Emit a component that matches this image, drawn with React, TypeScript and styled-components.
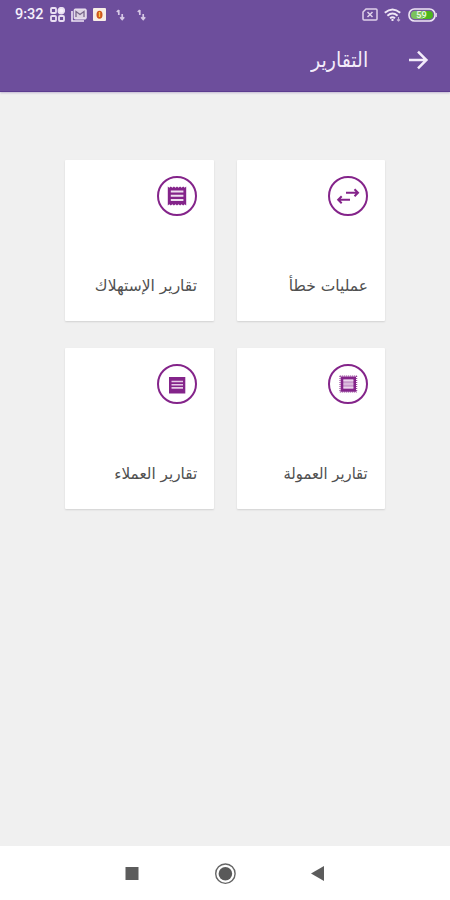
import React from 'react';
import styled, { createGlobalStyle } from 'styled-components';

const Global = createGlobalStyle`
  * { box-sizing: border-box; }
  body { margin: 0; background: #f0f0f0; }
`;

const Screen = styled.div`
  width: 450px;
  height: 900px;
  display: flex;
  flex-direction: column;
  background: #f0f0f0;
  font-family: 'DejaVu Sans', sans-serif;
  overflow: hidden;
`;

const Header = styled.header`
  height: 92px;
  flex: none;
  background: #6d4e9c;
  border-bottom: 1px solid #5c3c8f;
  box-shadow: 0 1px 2px rgba(109, 78, 156, 0.35);
`;

const StatusBar = styled.div`
  height: 29px;
  padding: 0 13px 0 15px;
  display: flex;
  align-items: center;
  justify-content: space-between;
`;

const StatusGroup = styled.div<{ $gap: number }>`
  display: flex;
  align-items: center;
  gap: ${(p) => p.$gap}px;
  svg { display: block; }
`;

const DataGroup = styled(StatusGroup)`
  padding-left: 4px;
`;

const Clock = styled.span`
  width: 29px;
  font: 500 14.5px/29px Roboto, sans-serif;
  color: #f5effb;
`;

const AppBar = styled.div`
  height: 62px;
  display: flex;
  direction: rtl;
  align-items: center;
  padding-right: 20px;
  gap: 39px;
  svg { display: block; }
`;

const Title = styled.h1<{ $scale: number }>`
  margin: 0;
  font-size: 21px;
  font-weight: 400;
  line-height: 30px;
  color: #f3ecfa;
  white-space: nowrap;
  transform: scaleX(${(p) => p.$scale});
  transform-origin: right center;
`;

const Content = styled.main`
  flex: 1;
  padding: 67.5px 65px 0;
`;

const Grid = styled.div`
  direction: rtl;
  display: grid;
  grid-template-columns: 148px 149px;
  grid-auto-rows: 161px;
  gap: 27px 23px;
`;

const Card = styled.article`
  background: #fff;
  border-radius: 1px;
  box-shadow: 0 1px 2px rgba(0, 0, 0, 0.13);
  padding: 16px 17px 22px;
  display: flex;
  flex-direction: column;
  justify-content: space-between;
  align-items: flex-start;
  svg { display: block; }
`;

const Label = styled.span<{ $scale: number }>`
  font-size: 15.5px;
  line-height: 26px;
  color: #505050;
  white-space: nowrap;
  transform: scaleX(${(p) => p.$scale});
  transform-origin: right center;
`;

const NavBar = styled.nav`
  height: 54px;
  flex: none;
  background: #fff;
  display: flex;
  justify-content: space-between;
  align-items: center;
  padding: 1px 125px 0;
  svg { display: block; }
`;

const purple = '#84248a';

type Kind = 'swap' | 'receipt' | 'receiptSmall' | 'receiptFramed';

const Ring = ({ kind }: { kind: Kind }) => (
  <svg width="40" height="40" viewBox="0 0 40 40" fill="none" stroke={purple}>
    <circle cx="20" cy="20" r="19" strokeWidth="2" />
    {kind === 'swap' && (
      <g strokeWidth="2">
        <path d="M18 16.7H29M26.5 13.2L30 16.7L26.5 20.2" />
        <path d="M22 23.8H11M13.7 20.3L10.2 23.8L13.7 27.3" />
      </g>
    )}
    {kind === 'receipt' && (
      <>
        <path
          fill={purple}
          stroke="none"
          d="M10.8 10.4l1.5 1.3 1.5-1.3 1.6 1.3 1.5-1.3 1.6 1.3 1.5-1.3 1.5 1.3 1.6-1.3 1.5 1.3 1.6-1.3 1.5 1.3 1.5-1.3v19.2l-1.5-1.3-1.5 1.3-1.6-1.3-1.5 1.3-1.6-1.3-1.5 1.3-1.5-1.3-1.6 1.3-1.5-1.3-1.6 1.3-1.5-1.3-1.5 1.3z"
        />
        <path stroke="#eee0f0" strokeWidth="2" d="M13.8 15.6h12.6M13.8 19.8h12.6M13.8 24h12.6" />
      </>
    )}
    {kind === 'receiptSmall' && (
      <>
        <path fill={purple} stroke="none" d="M12 13h16.3v16.5H12z" />
        <path stroke="#e5cbe6" strokeWidth="1.6" d="M14.5 17.5h11.5M14.5 20.7h11.5M14.5 23.9h11.5" />
      </>
    )}
    {kind === 'receiptFramed' && (
      <>
        <path strokeWidth="1" strokeDasharray="1 1" d="M11.8 12h17M11.8 28h17M12 12v16M28.7 12v16" />
        <path fill="#c99bcd" strokeWidth="2.6" d="M14 13.8h12.7v12.6H14z" />
        <path stroke="#ead5ec" strokeWidth="1.2" d="M15.5 16.7h9.8M15.5 20h9.8M15.5 23.3h9.8" />
      </>
    )}
  </svg>
);

const DataArrows = () => (
  <svg width="9" height="12" viewBox="0 0 9 12" stroke="#d6c8e5" fill="none" strokeWidth="1.7">
    <path d="M2.8 6V1M.8 3l2-2M6.2 5v5.5M4.2 8.3l2 2.2 2-2.2" />
  </svg>
);

const StatusLeft = () => (
  <StatusGroup $gap={6}>
    <Clock>9:32</Clock>
    <svg width="15" height="15" viewBox="0 0 15 15" fill="none" stroke="#e9dff2" strokeWidth="1.8">
      <rect x="1" y="1" width="5" height="5" rx="1" />
      <circle cx="11.3" cy="3.7" r="2.9" fill="#f6effb" />
      <rect x="1" y="9" width="5" height="5" rx="1" />
      <rect x="9" y="9" width="5" height="5" rx="1" />
    </svg>
    <svg width="16" height="14" viewBox="0 0 16 14" fill="none" stroke="#eee5f4">
      <path d="M1 3v10h12" strokeWidth="1.6" />
      <rect x="3.2" y="1" width="12" height="10" rx="1" fill="#ded4e4" />
      <path d="M5 9V3.5l4 3 4-3V9" stroke="#79688b" strokeWidth="1.3" />
    </svg>
    <svg width="13" height="13" viewBox="0 0 13 13">
      <rect width="13" height="13" rx="1" fill="#f8eee6" />
      <ellipse cx="6.5" cy="6.7" rx="3" ry="4" fill="#cf571d" />
      <path d="M6.5 4v5" stroke="#f9c549" strokeWidth="1.4" />
    </svg>
    <DataGroup $gap={12}>
      <DataArrows />
      <DataArrows />
    </DataGroup>
  </StatusGroup>
);

const StatusRight = () => (
  <StatusGroup $gap={6}>
    <svg width="16" height="13" viewBox="0 0 16 13" fill="none" stroke="#dfd1ea" strokeWidth="1.5">
      <path d="M4 1h10q1 0 1 1v9q0 1-1 1H2q-1 0-1-1V4z" />
      <path d="M5.5 4l5 5M10.5 4l-5 5" />
    </svg>
    <svg width="18" height="14" viewBox="0 0 18 14" fill="none" stroke="#f0e7f6" strokeWidth="2">
      <path d="M.8 4.8q7.7-6.6 15.4 0M3.4 7.7q5.1-4.3 10.2 0M6 10.3q2.5-2 5 0" />
      <path d="M8.5 11v2" />
      <path d="M14.5 9v4M13 11.5l1.5 1.5 1.5-1.5" stroke="#c8b5d9" strokeWidth="1.1" />
    </svg>
    <svg width="29" height="14" viewBox="0 0 29 14">
      <rect x="1" y="1" width="26" height="12" rx="5.5" fill="#765b9d" stroke="#eee5f5" strokeWidth="1.6" />
      <path d="M28.2 5v4" stroke="#eee5f5" strokeWidth="1.2" />
      <path d="M7 3h8v8H7q-4 0-4-4t4-4z" fill="#7cc35e" />
      <path d="M15 3h6q4 0 4 4t-4 4h-6z" fill="#4cb51d" />
      <text x="13.5" y="10.3" textAnchor="middle" fill="#e4f7dc" fontFamily="Roboto, sans-serif" fontWeight="700" fontSize="9">59</text>
    </svg>
  </StatusGroup>
);

const cards: { label: string; kind: Kind; scale: number }[] = [
  { label: 'عمليات خطأ', kind: 'swap', scale: 1 },
  { label: 'تقارير الإستهلاك', kind: 'receipt', scale: 1 },
  { label: 'تقارير العمولة', kind: 'receiptFramed', scale: 0.95 },
  { label: 'تقارير العملاء', kind: 'receiptSmall', scale: 0.985 },
];

export default function App() {
  return (
    <>
      <Global />
      <Screen>
        <Header>
          <StatusBar>
            <StatusLeft />
            <StatusRight />
          </StatusBar>
          <AppBar>
            <svg width="23" height="20" viewBox="0 0 23 20" fill="none" stroke="#f3ecfa" strokeWidth="2.5">
              <path d="M2 10h17.5M11 1.6l8.4 8.4-8.4 8.4" />
            </svg>
            <Title $scale={0.905}>التقارير</Title>
          </AppBar>
        </Header>
        <Content>
          <Grid>
            {cards.map((c) => (
              <Card key={c.label}>
                <Ring kind={c.kind} />
                <Label $scale={c.scale}>{c.label}</Label>
              </Card>
            ))}
          </Grid>
        </Content>
        <NavBar>
          <svg width="14" height="14" viewBox="0 0 14 14">
            <rect x=".5" y="0" width="13" height="13" fill="#5c5c5c" />
          </svg>
          <svg width="22" height="22" viewBox="0 0 22 22" fill="none" stroke="#666">
            <circle cx="11.4" cy="10.7" r="9.7" strokeWidth="1.4" />
            <circle cx="11.4" cy="10.7" r="6.8" fill="#595959" stroke="none" />
          </svg>
          <svg width="14" height="16" viewBox="0 0 14 16">
            <path d="M0 7.5L13 0v15z" fill="#5c5c5c" />
          </svg>
        </NavBar>
      </Screen>
    </>
  );
}
